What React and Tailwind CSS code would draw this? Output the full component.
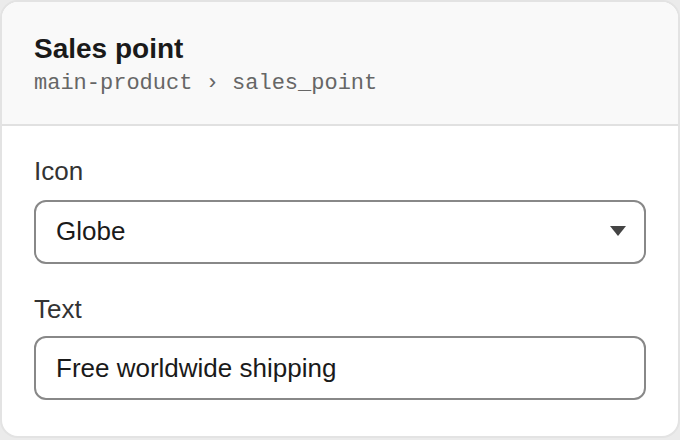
import React, { useState } from "react";

function Field({ label, gap, children }) {
  return (
    <div>
      <label className={`block text-[26px] leading-[30px] text-[#333] ${gap}`}>
        {label}
      </label>
      {children}
    </div>
  );
}

export default function App() {
  const [icon, setIcon] = useState("Globe");
  const [text, setText] = useState("Free worldwide shipping");

  return (
    <div
      className="w-[680px] h-[440px] bg-[#ebebeb]"
      style={{ fontFamily: '"Liberation Sans", Arial, sans-serif' }}
    >
      <div className="w-[680px] h-[438px] bg-white border-2 border-[#e3e3e3] rounded-[18px] overflow-hidden flex flex-col">
        <div className="bg-[#f9f9f9] border-b-2 border-[#e1e1e1] px-[32px] pt-[31px] pb-[26px]">
          <h2 className="text-[28px] leading-[32px] font-bold text-[#1a1a1a]">
            Sales point
          </h2>
          <div
            className="text-[22px] leading-[28px] text-[#666] mt-[5px]"
            style={{ fontFamily: '"Liberation Mono", monospace' }}
          >
            main-product › sales_point
          </div>
        </div>

        <div className="px-[32px] pt-[30px] flex flex-col gap-[30px]">
          <Field label="Icon" gap="mb-[14px]">
            <div className="relative">
              <select
                value={icon}
                onChange={(e) => setIcon(e.target.value)}
                className="appearance-none w-full h-[64px] border-2 border-[#888] rounded-[12px] bg-white px-[20px] pb-[2px] text-[26px] text-[#1a1a1a] outline-none"
              >
                <option>Globe</option>
                <option>Truck</option>
                <option>Star</option>
              </select>
              <svg
                className="absolute right-[20px] top-[26px] pointer-events-none"
                width="16"
                height="10"
                viewBox="0 0 16 10"
              >
                <path d="M0 0 L16 0 L8 10 Z" fill="#444" />
              </svg>
            </div>
          </Field>

          <Field label="Text" gap="mb-[12px]">
            <input
              type="text"
              value={text}
              onChange={(e) => setText(e.target.value)}
              className="w-full h-[64px] border-2 border-[#888] rounded-[12px] bg-white px-[20px] text-[26px] text-[#1a1a1a] outline-none"
            />
          </Field>
        </div>
      </div>
    </div>
  );
}
